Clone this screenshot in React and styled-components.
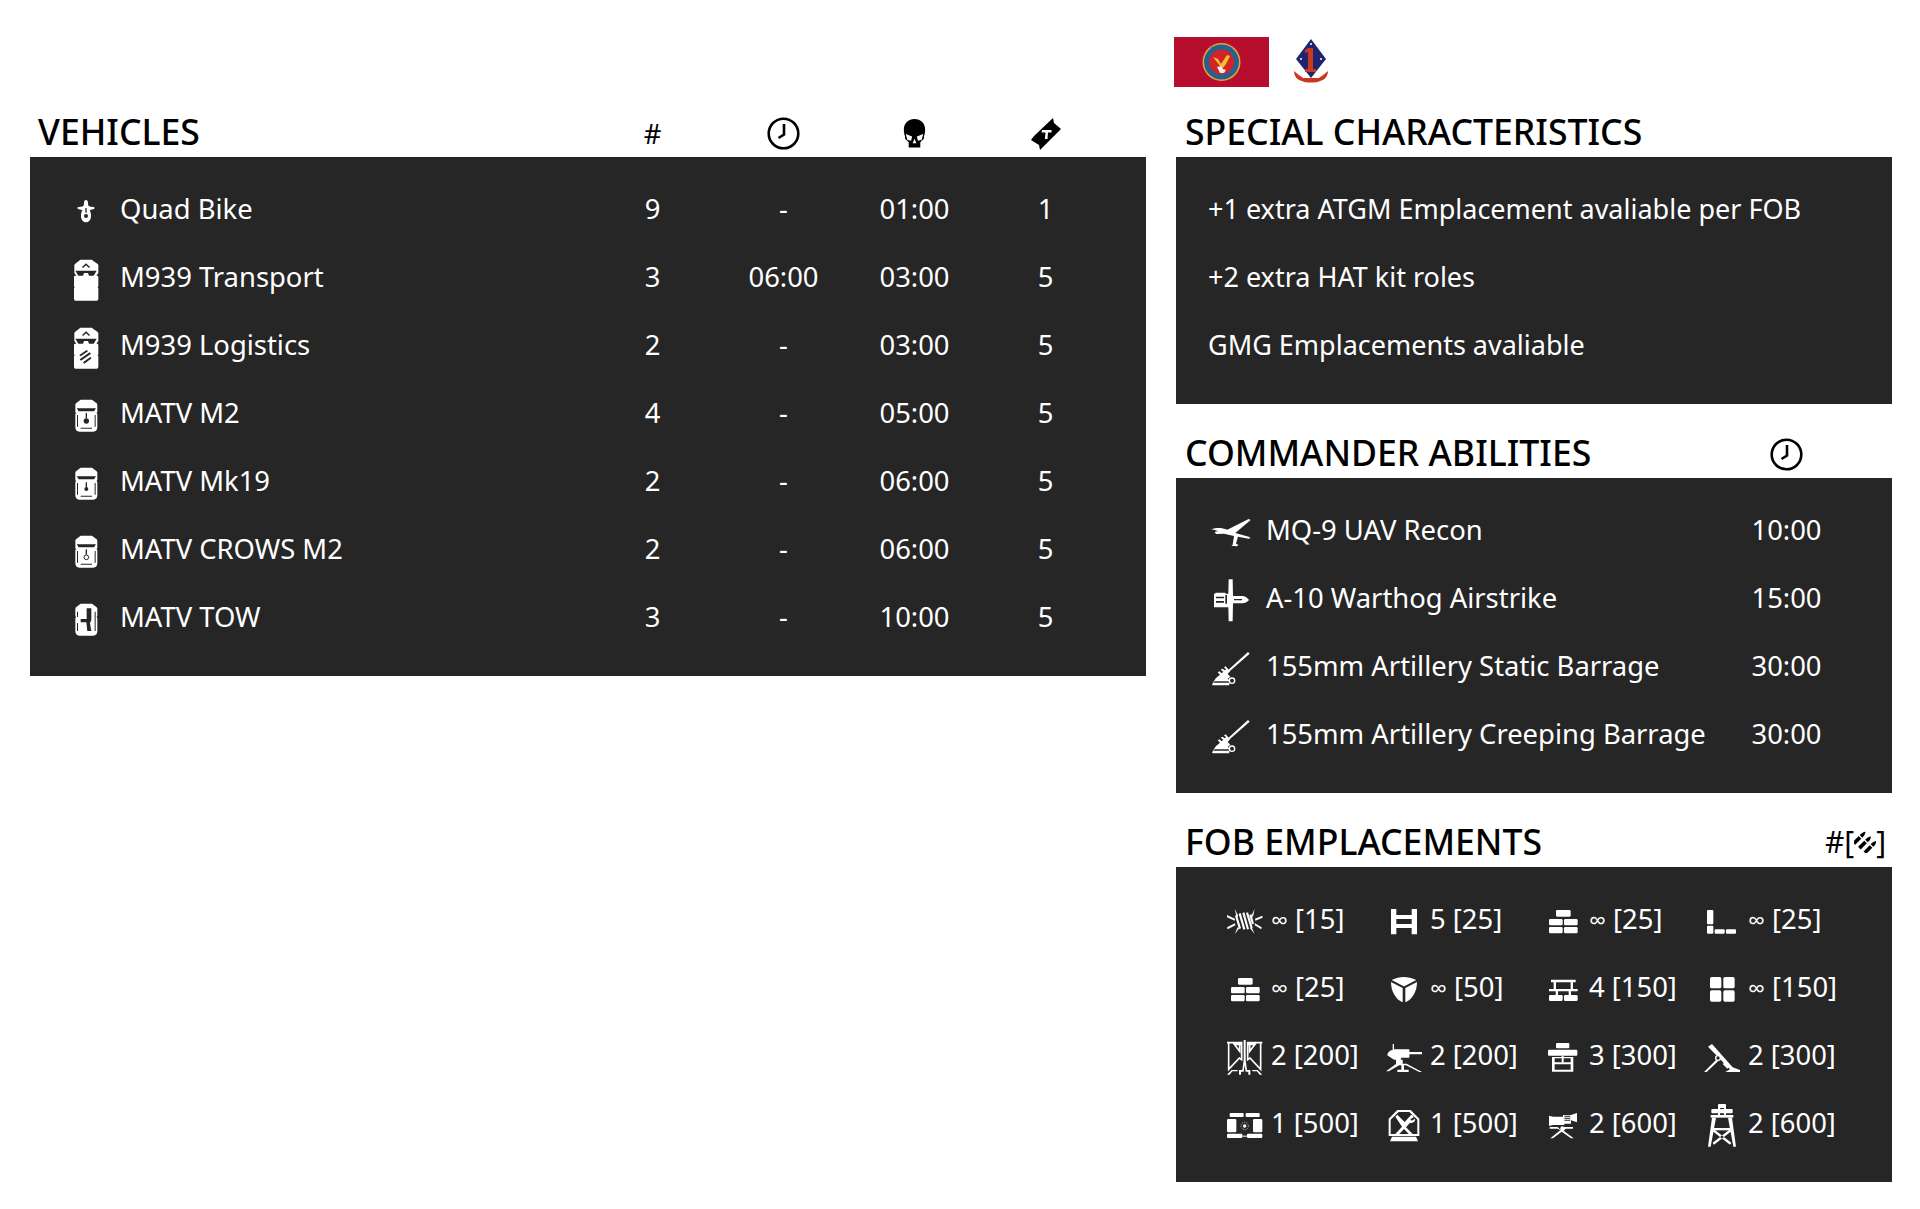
import React from 'react'
import styled, { createGlobalStyle } from 'styled-components'

const PANEL = '#262626'

const GlobalStyle = createGlobalStyle`
  html, body { margin: 0; padding: 0; background: #fff; }
  body { font-family: "Noto Sans", "Open Sans", sans-serif; color: #000; }
`

const Page = styled.div`
  display: grid;
  grid-template-columns: 1116px 716px;
  column-gap: 30px;
  padding: 36px 28px 27px 30px;
  width: 1920px;
  height: 1209px;
  box-sizing: border-box;
`
const Column = styled.div`
  display: flex;
  flex-direction: column;
  padding-top: ${p => p.$top || 0}px;
`
const Flags = styled.div`
  display: flex;
  align-items: center;
  gap: 25px;
  height: 51px;
  margin: 0 0 23px -2px;
`
const Section = styled.section`
  margin-bottom: 27px;
`
const Heading = styled.div`
  display: grid;
  grid-template-columns: ${p => p.$cols};
  align-items: center;
  height: 47px;
  padding: 0 ${p => p.$right || 0}px 0 ${p => p.$left || 8}px;
  white-space: nowrap;
`
const Title = styled.span`
  padding-bottom: 4px;
  font-size: 35.6px;
  font-weight: 500;
  line-height: 43px;
`
const HeadCell = styled.div`
  display: flex;
  justify-content: center;
  align-items: center;
  font-size: 27.4px;
`
const AmmoHead = styled.div`
  display: flex;
  align-items: center;
  padding-bottom: 4px;
  font-size: 30px;
`
const Panel = styled.div`
  background: ${PANEL};
  color: #fff;
  padding: 21.5px ${p => p.$right || 0}px 21.5px ${p => p.$left || 0}px;
  font-size: 27.4px;
`
const Row = styled.div`
  display: grid;
  grid-template-columns: ${p => p.$cols};
  align-items: center;
  height: 68px;
  white-space: nowrap;
`
const IconSlot = styled.div`
  display: flex;
  justify-content: center;
  align-items: center;
  padding-bottom: 2px;
`
const Name = styled.div`
  padding: 0 0 8px ${p => p.$indent || 0}px;
`
const Note = styled.div`
  padding-bottom: 8px;
  font-size: 27px;
`
const Value = styled.div`
  padding-bottom: 8px;
  text-align: center;
`
const Grid = styled.div`
  display: grid;
  grid-template-columns: repeat(4, 159px);
`
const Cell = styled.div`
  display: grid;
  grid-template-columns: 36px 1fr;
  column-gap: 8px;
  align-items: center;
  height: 68px;
  white-space: nowrap;
`
const CellText = styled.div`
  padding-bottom: 8px;
`
const Count = styled.span`
  font-size: ${p => (p.$infinite ? 24 : 27.4)}px;
`
const GlyphSvg = styled.svg`
  flex: none;
  overflow: visible;
  fill: currentColor;
`

const Glyph = ({ w, h, children }) => (
  <GlyphSvg width={w / 3} height={h / 3} viewBox={`0 0 ${w} ${h}`}>
    {children}
  </GlyphSvg>
)

const Clock = () => (
  <svg width="33" height="33" viewBox="0 0 33 33" fill="none" stroke="#000">
    <circle cx="16.5" cy="16.5" r="14.8" strokeWidth="2.6" />
    <path d="M17 7v10.5l-5.5 3.5" strokeWidth="2.6" />
  </svg>
)

const Skull = () => (
  <svg width="23" height="29" viewBox="0 0 23 30">
    <path d="M11.5 0C18 0 22.5 4.5 22.5 11c0 3-.6 5-1.2 7 .4 2-.6 3.5-2.3 4.2L17.5 24v5.5h-12V24l-1.5-1.800C2.3 21.500 1.200 20 1.700 18 1 16 .5 14 .5 11 .5 4.500 5 0 11.500 0z" fill="#000" />
    <path d="M2.500 15.500l6.500 2.500-1 4.500-4-1zM20.500 15.500L14 18l1 4.500 4-1z" fill="#fff" />
    <path d="M11.500 20.500l2 4.500h-4z" fill="#fff" />
  </svg>
)

const Ticket = () => (
  <svg width="32" height="32" viewBox="0 0 32 32">
    <path d="M23 0l1 5 7 6-3 3L10 32l-1-5-8-5 3-4z" fill="#000" />
    <path d="M12 12h9.500v2.400h-3.500L17.500 21h-2.600l.6-6.600h-4z" fill="#fff" />
  </svg>
)

const Truck = ({ stripes }) => (
  <Glyph w={78} h={126}>
    <path d="M22 2h34l18 13q2 2 2 4v23l-6 8h2a4 4 0 0 1 4 4v28l-2 3 2 3v32a5 5 0 0 1-5 5H8a5 5 0 0 1-5-5V88l2-3-2-3V54a4 4 0 0 1 4-4h3l-6-8V19q0-2 2-4z" />
    <path d="M27 24l12-11 12 11-3 3-9-8-9 8zM7 35h64l-9 15H48l-3-8H33l-3 8H16z" fill={PANEL} />
    {stripes && <path d="M19 84l22-15 4 4-22 15zM20 97l30-21 4 4-30 21zM30 106l22-16 4 4-22 16z" fill={PANEL} />}
  </Glyph>
)

const MATV_BODY = 'M20 2h34l14 11q2 2 2 5v20l-2 5 2 3v39c0 8-5 13-12 13H16C9 98 4 93 4 85V46l2-3-2-5V18q0-3 2-5z'

const Matv = ({ dot = 8, ring, neck = 16 }) => (
  <Glyph w={74} h={100}>
    <path d={MATV_BODY} />
    <path d="M8 28h58l-6 9H14zM20 86h34v3H20zM9 48h3v35H9zM62 48h3v35h-3z" fill={PANEL} />
    <rect x="35" y={66 - dot - neck} width="4" height={neck} fill={PANEL} />
    {ring
      ? <circle cx="37" cy="67" r={dot} fill="none" stroke={PANEL} strokeWidth="3" />
      : <circle cx="37" cy="66" r={dot} fill={PANEL} />}
  </Glyph>
)

const MatvTow = () => (
  <Glyph w={74} h={100}>
    <path d={MATV_BODY} />
    <path d="M38 16h14v36l-4 8 4 24H40l-3-26H20V48h18zM9 26h3v16H9zM9 60h3v24H9zM62 26h3v58h-3z" fill={PANEL} />
  </Glyph>
)

const QuadBike = () => (
  <Glyph w={55} h={70}>
    <path d="M27 0c4 0 6 4 6 9l1 8c6 3 12 4 18 4v6c-5 1-11 2-14 4 3 5 4 11 4 17 0 11-6 19-15 19s-15-8-15-19c0-6 1-12 4-17-3-2-9-3-14-4v-6c6 0 12-1 18-4l1-8c0-5 2-9 6-9z" />
    <circle cx="27" cy="48" r="6" fill={PANEL} />
    <rect x="25" y="24" width="4" height="14" fill={PANEL} />
  </Glyph>
)

const Uav = () => (
  <Glyph w={125} h={82}>
    <path d="M0 32c14-6 34-7 52 0L116 0l6 3-46 39 40 11 6 4-6 2-32-6-6 21 8 4-6 4-16-2 4-3 4-26-30-7-24 1-4-6 10-3-18-5z" />
  </Glyph>
)

const Warthog = () => (
  <Glyph w={112} h={128}>
    <path d="M50 1h12l1 50h28c8 0 16 6 20 12-4 5-12 10-20 10H63l-1 54H50l-1-42H6V44h4v-3h30v3h9z" />
    <path d="M12 53h24v5H12zM12 66h24v5H12zM40 48h5v26h-5zM66 60h24v4H66z" fill={PANEL} />
  </Glyph>
)

const Howitzer = () => (
  <Glyph w={114} h={100}>
    <path d="M108 0l5 5-66 58-4-4z" />
    <path d="M36 46l5-3 13 15-7 8 8 8-8 6 9 8H8l-8 8 12-18 12-10-7-7 5-3 7 6 5-5-8-6 5-3 8 5 3-3z" />
    <path d="M0 98l4-6h48v8H2z" />
    <circle cx="60" cy="86" r="8" fill="none" stroke="currentColor" strokeWidth="4" />
  </Glyph>
)

const Wire = () => (
  <Glyph w={106} h={80}>
    <path d="M0 21l24 11-1 6L0 28zM0 58l24-12 1 6L2 64zM106 23l-22 9 1 6 22-9zM104 58L84 46l-1 6 20 12zM23 2l11 22-5 3zM83 2L73 24l5 3zM23 78l9-20 5 3zM83 78l-9-20-5 3z" />
    <path d="M27 22l12 40M38 16l14 48M49 14l14 50M60 14l14 46M70 20l8 28" fill="none" stroke="currentColor" strokeWidth="6.5" />
  </Glyph>
)

const Frame = () => (
  <Glyph w={78} h={76}>
    <path d="M0 0h16v76H0zM62 0h16v76H62zM16 18h46v12H16zM16 45h46v12H16z" />
  </Glyph>
)

const Bricks = () => (
  <Glyph w={86} h={71}>
    <rect x="21" y="0" width="44" height="20" rx="4" />
    <rect x="0" y="27" width="41" height="19" rx="4" />
    <rect x="45" y="27" width="41" height="19" rx="4" />
    <rect x="0" y="51" width="41" height="19" rx="4" />
    <rect x="45" y="51" width="41" height="19" rx="4" />
  </Glyph>
)

const Corner = () => (
  <Glyph w={88} h={72}>
    <rect x="0" y="0" width="19" height="43" rx="3" />
    <rect x="0" y="47" width="19" height="24" rx="3" />
    <rect x="23" y="58" width="30" height="13" rx="3" />
    <rect x="57" y="58" width="30" height="13" rx="3" />
  </Glyph>
)

const Cube = () => (
  <Glyph w={78} h={76}>
    <path d="M38 0c12 0 26 3 38 9L40 28h-2L2 9C14 3 26 0 38 0z" />
    <path d="M0 15l35 18v43C15 68 0 44 0 15z" />
    <path d="M78 15L43 33v43c20-8 35-32 35-61z" />
  </Glyph>
)

const Desk = () => (
  <Glyph w={86} h={66}>
    <path d="M6 2h74v8h-8v20h14v7H0v-7h14V10H6zM21 10v20h44V10zM20 37h7v11h-7zM59 37h7v11h-7z" fillRule="evenodd" />
    <rect x="0" y="48" width="41" height="18" rx="4" />
    <rect x="45" y="48" width="41" height="18" rx="4" />
  </Glyph>
)

const Squares = () => (
  <Glyph w={74} h={74}>
    <rect x="0" y="0" width="34" height="34" rx="5" />
    <rect x="40" y="0" width="34" height="34" rx="5" />
    <rect x="0" y="40" width="34" height="34" rx="5" />
    <rect x="40" y="40" width="34" height="34" rx="5" />
  </Glyph>
)

const Launcher = () => (
  <Glyph w={106} h={106}>
    <path d="M0 8h44v5H22L38 34V13h6v46l-7-5L5 88V8zM106 8H62v5h22L68 34V13h-6v46l7-5 32 34V8z" fill="none" stroke="currentColor" strokeWidth="5" />
    <path d="M50 0h6v60l4 30h10v14h-6v-9h-8l-3-20-3 20h-8v9h-6V90h10l4-30z" />
    <path d="M0 104l14-14h18v4H16l-8 10zM106 104L92 90H76v4h14l8 10z" />
  </Glyph>
)

const MachineGun = () => (
  <Glyph w={108} h={84}>
    <path d="M20 0h4v16h46v8h38v7H70v10H46l-2 6h6v12h12l46 25h-8L60 64H54v13h14v7H34v-7h12V64h-6L8 82H0l30-22V47h-6L4 34c0-8 6-14 14-16h2z" />
  </Glyph>
)

const Hq = () => (
  <Glyph w={88} h={86}>
    <rect x="24" y="0" width="40" height="16" rx="3" />
    <rect x="0" y="20" width="88" height="18" rx="3" />
    <path d="M12 42h64v44H12zM20 46v12h48V46zM20 64v16h48V64z" fillRule="evenodd" />
    <rect x="41" y="38" width="6" height="20" />
  </Glyph>
)

const Mortar = () => (
  <Glyph w={108} h={84}>
    <path d="M12 8l12-8 62 70 22 8v6H64l14-8z" />
    <path d="M42 42l-42 42h8l38-36zM56 60l6-6 14 14-6 6z" />
    <circle cx="42" cy="42" r="7" fill={PANEL} stroke="currentColor" strokeWidth="4" />
  </Glyph>
)

const Bunker = () => (
  <Glyph w={106} h={76}>
    <rect x="8" y="0" width="42" height="12" rx="3" />
    <rect x="56" y="0" width="42" height="12" rx="3" />
    <rect x="0" y="18" width="28" height="40" rx="4" />
    <rect x="78" y="18" width="28" height="40" rx="4" />
    <rect x="0" y="62" width="46" height="13" rx="3" />
    <rect x="60" y="62" width="46" height="13" rx="3" />
    <circle cx="53" cy="39" r="5" />
    <circle cx="53" cy="39" r="11" fill="none" stroke="currentColor" strokeWidth="2" strokeDasharray="3 3" />
    <rect x="46" y="68" width="14" height="3" />
  </Glyph>
)

const Repair = () => (
  <Glyph w={96} h={94}>
    <path d="M28 0h40l26 26v52H2V26zM32 6L8 29v43h80V29L64 6z" fillRule="evenodd" />
    <path d="M22 20l6-6 22 22 20-22c4 1 6 4 7 8l-10 6 4 4 10-6c1 5-1 9-5 11-3 2-7 2-10 1L54 52l20 20-6 6-20-21-20 21-6-6 20-22z" />
    <path d="M12 80h72l6 14H6z" />
  </Glyph>
)

const Optic = () => (
  <Glyph w={84} h={76}>
    <path d="M0 8l12 3h30V6h24l18-6v28l-18-6v10H46v4H12l-12 3z" />
    <path d="M46 8h18v3H46zM46 14h18v3H46zM46 20h18v3H46z" fill={PANEL} />
    <path d="M2 42h24l8 8 12-8h26v5H50l-6 6 30 23h-8L38 56 12 76H4l30-24-8-5H2z" />
    <circle cx="40" cy="46" r="6" />
  </Glyph>
)

const Tower = () => (
  <Glyph w={84} h={128}>
    <rect x="30" y="0" width="24" height="12" rx="3" />
    <rect x="10" y="15" width="64" height="13" rx="3" />
    <rect x="8" y="33" width="68" height="8" />
    <path d="M12 41h12L8 128H0zM72 41H60l16 87h8z" />
    <path d="M10 72h64v7H10z" />
    <path d="M18 76l52 40-4 6-52-40zM66 76L14 116l4 6 52-40z" />
    <path d="M30 10h6v24h-6zM48 10h6v24h-6z" />
  </Glyph>
)

const Bullet = ({ x, y }) => (
  <g transform={`translate(${x} ${y}) rotate(45)`}>
    <path d="M0-10C1.5-8 2-6 2-4v1h-4v-1C-2-6-1.5-8 0-10zM-2-1.500h4V8h-4z" fill="#000" />
  </g>
)

const Ammo = () => (
  <svg width="22" height="22" viewBox="0 0 24 24">
    <Bullet x={5.5} y={8} />
    <Bullet x={11.5} y={13} />
    <Bullet x={17.5} y={18} />
  </svg>
)

const Flag = () => (
  <svg width="95" height="50" viewBox="0 0 95 50">
    <rect width="95" height="50" fill="#b70d2f" />
    <circle cx="47.5" cy="25" r="19" fill="#e6a43a" />
    <circle cx="47.5" cy="25" r="17.5" fill="#25618f" />
    <circle cx="47.5" cy="25" r="12.5" fill="#d2232a" />
    <path d="M39 20l5 2 3 5 6-9 3 1-4 8-3 4-3-2-3-4z" fill="#f3c326" />
    <path d="M43 30l4-1 2 3 3 1-2 3h-4z" fill="#eee" />
  </svg>
)

const Emblem = () => (
  <svg width="34" height="45" viewBox="0 0 34 45">
    <path d="M17 0l15 20-15 19L2 20z" fill="#1f2370" />
    <path d="M14 9h5v21h3v3H11v-3h3V13l-3 1v-3z" fill="#c9391e" />
    <circle cx="7" cy="20" r="1" fill="#fff" />
    <circle cx="27" cy="20" r="1" fill="#fff" />
    <circle cx="17" cy="5" r="1" fill="#fff" />
    <path d="M0 32c3 3 7 5 9 7h16c2-2 6-4 9-7 0 5-3 9-8 10-3 2-15 2-18 0-5-1-8-5-8-10z" fill="#c9391e" />
  </svg>
)

const vehicles = [
  [<QuadBike />, 'Quad Bike', '9', '-', '01:00', '1'],
  [<Truck />, 'M939 Transport', '3', '06:00', '03:00', '5'],
  [<Truck stripes />, 'M939 Logistics', '2', '-', '03:00', '5'],
  [<Matv />, 'MATV M2', '4', '-', '05:00', '5'],
  [<Matv dot={6} neck={14} />, 'MATV Mk19', '2', '-', '06:00', '5'],
  [<Matv ring dot={7} />, 'MATV CROWS M2', '2', '-', '06:00', '5'],
  [<MatvTow />, 'MATV TOW', '3', '-', '10:00', '5'],
]

const abilities = [
  [<Uav />, 'MQ-9 UAV Recon', '10:00'],
  [<Warthog />, 'A-10 Warthog Airstrike', '15:00'],
  [<Howitzer />, '155mm Artillery Static Barrage', '30:00'],
  [<Howitzer />, '155mm Artillery Creeping Barrage', '30:00'],
]

const emplacements = [
  [<Wire />, '∞', '[15]'],
  [<Frame />, '5', '[25]'],
  [<Bricks />, '∞', '[25]'],
  [<Corner />, '∞', '[25]'],
  [<Bricks />, '∞', '[25]'],
  [<Cube />, '∞', '[50]'],
  [<Desk />, '4', '[150]'],
  [<Squares />, '∞', '[150]'],
  [<Launcher />, '2', '[200]'],
  [<MachineGun />, '2', '[200]'],
  [<Hq />, '3', '[300]'],
  [<Mortar />, '2', '[300]'],
  [<Bunker />, '1', '[500]'],
  [<Repair />, '1', '[500]'],
  [<Optic />, '2', '[600]'],
  [<Tower />, '2', '[600]'],
]

const VEHICLE_COLS = '40px 1fr repeat(4, 131px)'
const ABILITY_COLS = '44px 1fr 131px'

const App = () => (
  <>
    <GlobalStyle />
    <Page>
      <Column $top={74}>
        <Section>
          <Heading $cols="1fr repeat(4, 131px)" $right={35}>
            <Title>VEHICLES</Title>
            <HeadCell>#</HeadCell>
            <HeadCell><Clock /></HeadCell>
            <HeadCell><Skull /></HeadCell>
            <HeadCell><Ticket /></HeadCell>
          </Heading>
          <Panel $left={36} $right={35}>
            {vehicles.map(([icon, name, count, delay, respawn, tickets]) => (
              <Row key={name} $cols={VEHICLE_COLS}>
                <IconSlot>{icon}</IconSlot>
                <Name $indent={14}>{name}</Name>
                <Value>{count}</Value>
                <Value>{delay}</Value>
                <Value>{respawn}</Value>
                <Value>{tickets}</Value>
              </Row>
            ))}
          </Panel>
        </Section>
      </Column>
      <Column>
        <Flags>
          <Flag />
          <Emblem />
        </Flags>
        <Section>
          <Heading $cols="1fr" $left={9}>
            <Title>SPECIAL CHARACTERISTICS</Title>
          </Heading>
          <Panel $left={32} $right={32}>
            <Row $cols="1fr"><Note>+1 extra ATGM Emplacement avaliable per FOB</Note></Row>
            <Row $cols="1fr"><Note>+2 extra HAT kit roles</Note></Row>
            <Row $cols="1fr"><Note>GMG Emplacements avaliable</Note></Row>
          </Panel>
        </Section>
        <Section>
          <Heading $cols="1fr 131px" $left={9} $right={40}>
            <Title>COMMANDER ABILITIES</Title>
            <HeadCell><Clock /></HeadCell>
          </Heading>
          <Panel $left={33} $right={40}>
            {abilities.map(([icon, name, time]) => (
              <Row key={name} $cols={ABILITY_COLS}>
                <IconSlot>{icon}</IconSlot>
                <Name $indent={13}>{name}</Name>
                <Value>{time}</Value>
              </Row>
            ))}
          </Panel>
        </Section>
        <Section>
          <Heading $cols="1fr auto" $left={9} $right={6}>
            <Title>FOB EMPLACEMENTS</Title>
            <AmmoHead>#[<Ammo />]</AmmoHead>
          </Heading>
          <Panel $left={51} $right={29}>
            <Grid>
              {emplacements.map(([icon, count, cost], i) => (
                <Cell key={i}>
                  <IconSlot>{icon}</IconSlot>
                  <CellText><Count $infinite={count === '∞'}>{count}</Count> {cost}</CellText>
                </Cell>
              ))}
            </Grid>
          </Panel>
        </Section>
      </Column>
    </Page>
  </>
)

export default App
